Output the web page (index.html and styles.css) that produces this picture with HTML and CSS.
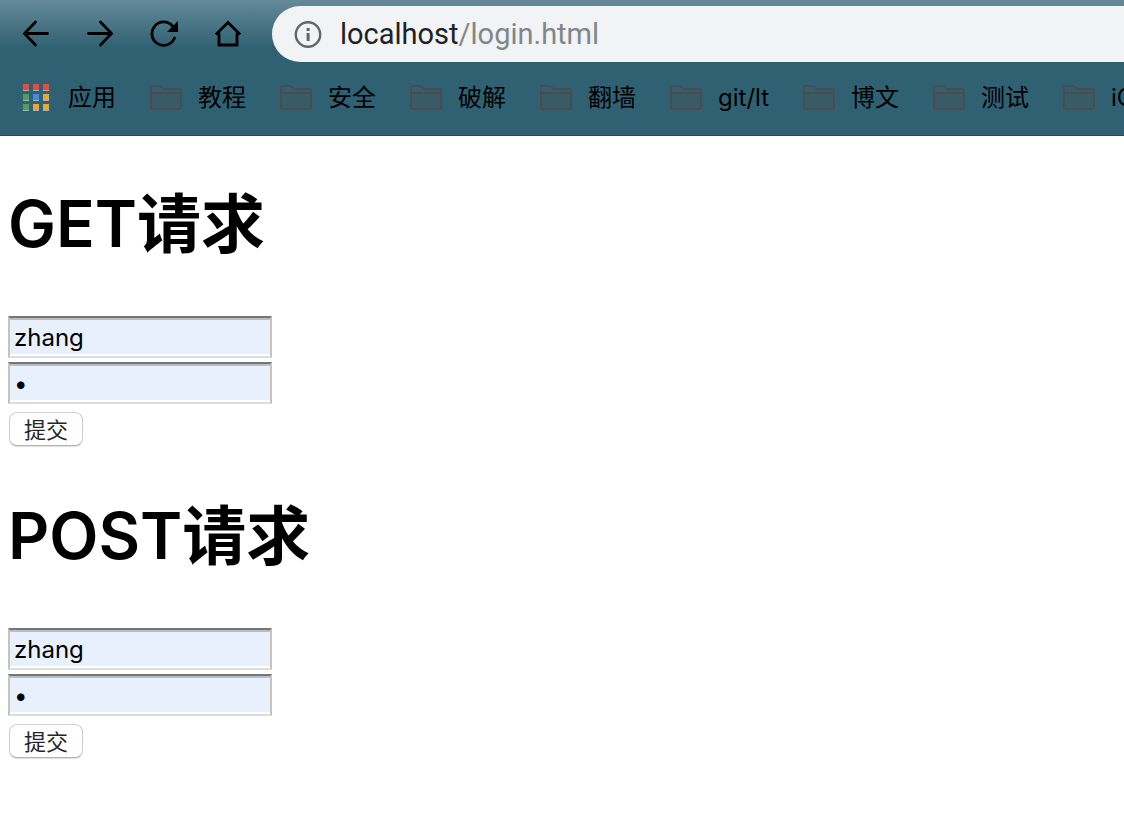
FILE: index.html
```html
<!DOCTYPE html>
<html lang="zh-CN">
<head>
<meta charset="utf-8">
<title>login</title>
<link rel="stylesheet" href="styles.css">
</head>
<body>
<svg class="defs" aria-hidden="true">
  <symbol id="folder" viewBox="0 0 32 26">
    <path d="M1 9H31V25H1Z" fill="#385b66"/>
    <path d="M2 2H10L14 5H30Q31 5 31 6V24Q31 25 30 25H2Q1 25 1 24V3Q1 2 2 2ZM1 9H31" fill="none" stroke="#4e4b4e" stroke-width="1.800"/>
  </symbol>
</svg>
<header class="browser">
  <div class="toolbar">
    <nav class="nav" aria-label="导航">
      <button class="nav-btn" type="button" aria-label="后退"><svg viewBox="0 0 28 28"><path d="M25.500 13.500H3M13.500 2L2.500 13.500L13.500 25"/></svg></button>
      <button class="nav-btn" type="button" aria-label="前进"><svg viewBox="0 0 28 28"><path d="M2.500 13.500H25M14.500 2L25.500 13.500L14.500 25"/></svg></button>
      <button class="nav-btn" type="button" aria-label="刷新"><svg viewBox="0 0 28 28"><path d="M24.500 18A11.700 11.700 0 1 1 22.500 6"/><path class="solid" d="M28 1V12H17Z"/></svg></button>
      <button class="nav-btn" type="button" aria-label="主页"><svg viewBox="0 0 28 28"><path d="M1.800 14.500L14 2.500L26.200 14.500M5 12.500V25H23V12.500" stroke-linecap="butt"/></svg></button>
    </nav>
    <a class="address" href="#">
      <svg class="info" viewBox="0 0 28 28"><circle cx="14" cy="14.500" r="12.200" fill="none" stroke="#62666b" stroke-width="2.400"/><path d="M12.600 8h3v3h-3zM12.600 13h3v8h-3z" fill="#62666b"/></svg>
      <span class="url">localhost<span class="path">/login.html</span></span>
    </a>
  </div>
  <nav class="bookmarks" aria-label="书签">
    <a class="bookmark apps" href="#"><svg class="grid" viewBox="0 0 26 27"><g fill="#9fb2bb"><path d="M0 1h6v6H0zM10 1h6v6h-6zM20 1h6v6h-6zM0 11h6v6H0zM10 11h6v6h-6zM20 11h6v6h-6zM0 21h6v6H0zM10 21h6v6h-6zM20 21h6v6h-6z"/></g><path fill="#e44c40" d="M0 0h6v6H0zM10 0h6v6h-6zM20 0h6v6h-6z"/><path fill="#549b5c" d="M0 10h6v6H0zM0 20h6v6H0z"/><path fill="#438be9" d="M10 10h6v6h-6z"/><path fill="#eba539" d="M20 10h6v6h-6zM10 20h6v6h-6zM20 20h6v6h-6z"/></svg><span class="label">应用</span></a>
    <a class="bookmark" href="#"><svg class="folder"><use href="#folder"/></svg><span class="label">教程</span></a>
    <a class="bookmark" href="#"><svg class="folder"><use href="#folder"/></svg><span class="label">安全</span></a>
    <a class="bookmark" href="#"><svg class="folder"><use href="#folder"/></svg><span class="label">破解</span></a>
    <a class="bookmark" href="#"><svg class="folder"><use href="#folder"/></svg><span class="label">翻墙</span></a>
    <a class="bookmark" href="#"><svg class="folder"><use href="#folder"/></svg><span class="label">git/lt</span></a>
    <a class="bookmark" href="#"><svg class="folder"><use href="#folder"/></svg><span class="label">博文</span></a>
    <a class="bookmark" href="#"><svg class="folder"><use href="#folder"/></svg><span class="label">测试</span></a>
    <a class="bookmark" href="#"><svg class="folder"><use href="#folder"/></svg><span class="label">iC</span></a>
  </nav>
</header>
<main class="page">
  <h1 class="title">GET请求</h1>
  <form class="form" method="get">
    <input class="field" type="text" name="username" value="zhang" aria-label="用户名">
    <input class="field" type="password" name="password" value="1" aria-label="密码">
    <button class="submit" type="submit">提交</button>
  </form>
  <h1 class="title">POST请求</h1>
  <form class="form" method="post">
    <input class="field" type="text" name="username" value="zhang" aria-label="用户名">
    <input class="field" type="password" name="password" value="1" aria-label="密码">
    <button class="submit" type="submit">提交</button>
  </form>
</main>
</body>
</html>
```
FILE: styles.css
```css
* { box-sizing: border-box; }

body {
  margin: 0;
  background: #fff;
  color: #000;
  font-family: Inter, "Noto Sans CJK SC", sans-serif;
  overflow-x: hidden;
}

.defs { display: none; }

.browser {
  height: 136px;
  overflow: hidden;
  border-bottom: 1px solid #264b58;
  background: linear-gradient(#648a98 0, #306173 48px);
}

.toolbar {
  display: flex;
  align-items: center;
  padding: 6px 0 0 22px;
}

.nav {
  display: flex;
  gap: 36px;
  margin-right: 30px;
}

.nav-btn {
  width: 28px;
  height: 28px;
  padding: 0;
  border: 0;
  background: none;
}

.nav-btn svg {
  display: block;
  fill: none;
  stroke: #000;
  stroke-width: 2.8;
  stroke-linecap: round;
}

.nav-btn .solid { fill: #000; stroke: none; }

.address {
  display: flex;
  flex: 1;
  align-items: center;
  gap: 18px;
  height: 56px;
  padding-left: 22px;
  border-radius: 28px 0 0 28px;
  background: #f1f3f4;
  color: #202124;
  font-family: Roboto, sans-serif;
  font-size: 29px;
  text-decoration: none;
}

.info { width: 28px; height: 28px; }
.path { color: #80868b; }

.bookmarks {
  display: flex;
  gap: 34px;
  padding: 17px 0 0 23px;
}

.bookmark {
  display: flex;
  flex: none;
  align-items: center;
  gap: 16px;
  height: 36px;
  color: #000;
  font-size: 24px;
  line-height: 36px;
  text-decoration: none;
}

.label { padding-top: 2px; }
.apps { gap: 19px; }
.grid { width: 26px; height: 27px; }
.folder { width: 32px; height: 26px; }

.page { padding: 40px 8px; }

.title {
  margin: 0 0 44px;
  font-family: Inter, "Noto Sans CJK SC", sans-serif;
  font-size: 64px;
  font-weight: 600;
  line-height: 96px;
}

.form {
  display: flex;
  flex-direction: column;
  align-items: flex-start;
  gap: 4px;
  margin-bottom: 42px;
}

.field {
  width: 264px;
  height: 42px;
  padding: 2px 4px;
  border: 2px solid;
  border-color: #757575 #c3c3c3 #dcdcdc;
  border-radius: 0;
  outline: 0;
  background: #e8effd;
  box-shadow: inset 0 2px #bcbdc0, inset 0 -2px #fff, inset 2px 0 #eeeef0, inset -2px 0 #eeeef0;
  color: #000;
  font-family: Inter, sans-serif;
  font-size: 24px;
}

.submit {
  width: 74px;
  height: 34px;
  margin: 4px 1px 0;
  padding: 0 0 2px;
  border: 1px solid #cfcfcf;
  border-bottom-color: #b5b5b5;
  border-radius: 8px;
  background: #fff;
  box-shadow: 0 1px 1px #ddd;
  color: #262626;
  font-family: "Noto Sans CJK SC", sans-serif;
  font-size: 22px;
  line-height: 30px;
}
```
